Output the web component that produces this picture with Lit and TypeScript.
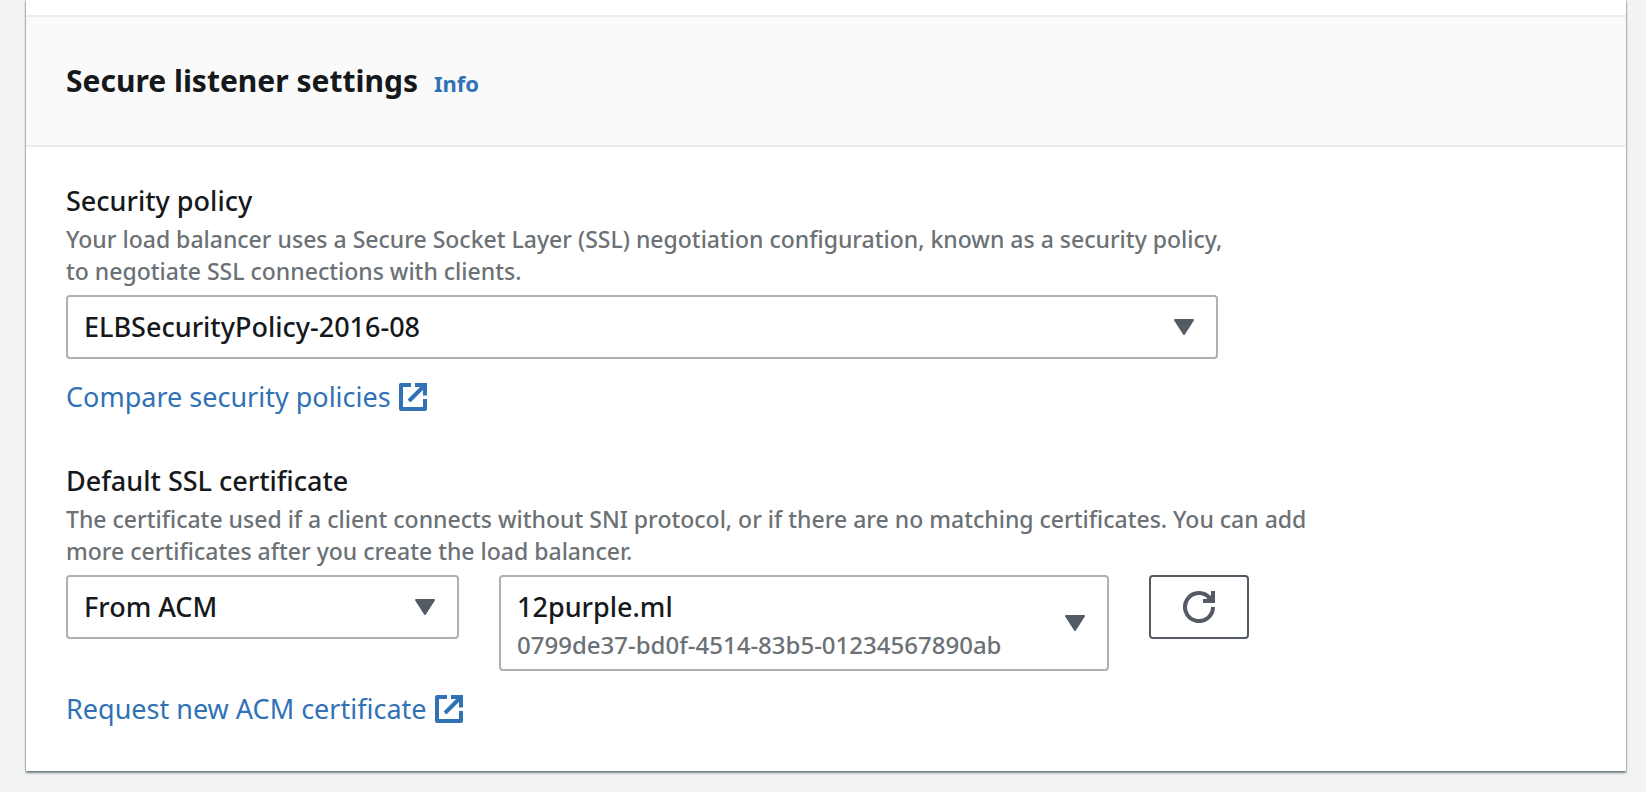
import { LitElement, html, css } from "lit";
import { customElement, property } from "lit/decorators.js";

@customElement("external-link")
export class ExternalLink extends LitElement {
  @property() href = "#";

  static styles = css`
    :host {
      display: flex;
    }
    .link {
      display: flex;
      align-items: center;
      gap: 8px;
      color: #3171b5;
      font-size: 27px;
      line-height: 36px;
      text-decoration: none;
    }
    .link:hover {
      text-decoration: underline;
    }
    .icon {
      width: 28px;
      height: 28px;
      flex: none;
      fill: none;
      stroke: currentColor;
      stroke-width: 4;
    }
  `;

  render() {
    return html`<a class="link" href=${this.href}
      ><slot></slot>
      <svg class="icon" viewBox="0 0 28 28" aria-hidden="true">
        <path d="M12 2H2V26H26V16" stroke-linejoin="round" />
        <path d="M16 2H26V12.5M10 18L25 3" />
      </svg>
    </a>`;
  }
}

@customElement("app-root")
export class AppRoot extends LitElement {
  static styles = css`
    :host {
      display: block;
      box-sizing: border-box;
      min-height: 100vh;
      padding: 0 20px 20px 26px;
      background: #f2f3f3;
      color: #16191c;
      font-family: "Noto Sans", "Open Sans", sans-serif;
      font-size: 27px;
      line-height: 36px;
    }
    .card {
      padding-top: 15px;
      background: #fff;
      box-shadow:
        0 2px 2px rgba(0, 28, 36, 0.5),
        0 0 2px rgba(0, 28, 36, 0.4);
    }
    .header {
      display: flex;
      align-items: baseline;
      gap: 16px;
      padding: 42px 40px;
      background: #fafafa;
      border-top: 2px solid #eaeded;
      border-bottom: 2px solid #eaeded;
    }
    .title {
      margin: 0;
      font-size: 30px;
      line-height: 44px;
      font-weight: 700;
    }
    .info {
      color: #3171b5;
      font-size: 22px;
      line-height: 32px;
      font-weight: 700;
      text-decoration: none;
    }
    .body {
      display: flex;
      flex-direction: column;
      gap: 48px;
      padding: 36px 40px 44px;
    }
    .label {
      display: block;
      font-weight: 500;
    }
    .hint {
      margin: 4px 0 8px;
      max-width: 1244px;
      color: #6b7175;
      font-size: 23px;
      line-height: 32px;
      font-weight: 500;
    }
    .narrow {
      max-width: 1170px;
    }
    .controls {
      display: grid;
      grid-template-columns: minmax(0, 393fr) minmax(0, 610fr) 100px;
      align-items: start;
      gap: 40px;
      max-width: 1183px;
      margin-bottom: 20px;
    }
    .single {
      max-width: 1152px;
      margin-bottom: 20px;
    }
    .field {
      display: grid;
      align-items: center;
    }
    .select,
    .arrow,
    .detail {
      grid-area: 1 / 1;
    }
    .select {
      appearance: none;
      box-sizing: border-box;
      width: 100%;
      height: 64px;
      margin: 0;
      padding: 0 60px 0 16px;
      border: 2px solid #adb1b1;
      border-radius: 4px;
      background: #fff;
      color: inherit;
      font: inherit;
      font-weight: 500;
    }
    .tall {
      height: 96px;
      padding-bottom: 32px;
    }
    .detail {
      align-self: end;
      padding: 0 60px 10px 18px;
      color: #6b7175;
      font-size: 24px;
      line-height: 32px;
      font-weight: 500;
      pointer-events: none;
    }
    .arrow {
      justify-self: end;
      width: 20px;
      height: 16px;
      margin-right: 24px;
      fill: #545b64;
      stroke: #545b64;
      stroke-width: 2;
      stroke-linejoin: round;
      pointer-events: none;
    }
    .refresh {
      display: flex;
      align-items: center;
      justify-content: center;
      box-sizing: border-box;
      height: 64px;
      padding: 0;
      border: 2px solid #545b64;
      border-radius: 4px;
      background: #fff;
      color: #545b64;
    }
    .refresh-icon {
      width: 32px;
      height: 32px;
      fill: none;
      stroke: currentColor;
      stroke-width: 4;
    }
  `;

  private arrow() {
    return html`<svg class="arrow" viewBox="0 0 20 16" aria-hidden="true">
      <path d="M1 1H19L10 15Z" />
    </svg>`;
  }

  render() {
    return html`
      <section class="card">
        <header class="header">
          <h2 class="title">Secure listener settings</h2>
          <a class="info" href="#">Info</a>
        </header>
        <div class="body">
          <div>
            <label class="label" for="policy">Security policy</label>
            <p class="hint narrow" id="policy-hint">
              Your load balancer uses a Secure Socket Layer (SSL) negotiation configuration, known as a security policy,
              to negotiate SSL connections with clients.
            </p>
            <div class="field single">
              <select class="select" id="policy" aria-describedby="policy-hint">
                <option>ELBSecurityPolicy-2016-08</option>
              </select>
              ${this.arrow()}
            </div>
            <external-link>Compare security policies</external-link>
          </div>
          <div>
            <label class="label" for="source">Default SSL certificate</label>
            <p class="hint" id="source-hint">
              The certificate used if a client connects without SNI protocol, or if there are no matching certificates.
              You can add more certificates after you create the load balancer.
            </p>
            <div class="controls">
              <div class="field">
                <select class="select" id="source" aria-describedby="source-hint">
                  <option>From ACM</option>
                </select>
                ${this.arrow()}
              </div>
              <div class="field">
                <select class="select tall" aria-label="Certificate" aria-describedby="certificate-id">
                  <option>12purple.ml</option>
                </select>
                <span class="detail" id="certificate-id">0799de37-bd0f-4514-83b5-01234567890ab</span>
                ${this.arrow()}
              </div>
              <button class="refresh" type="button" aria-label="Refresh certificates">
                <svg class="refresh-icon" viewBox="0 0 32 32" aria-hidden="true">
                  <path d="M30 16A14 14 0 1 1 27 7.4" />
                  <path d="M20 10H30V0M24 10L30 5" />
                </svg>
              </button>
            </div>
            <external-link>Request new ACM certificate</external-link>
          </div>
        </div>
      </section>
    `;
  }
}
